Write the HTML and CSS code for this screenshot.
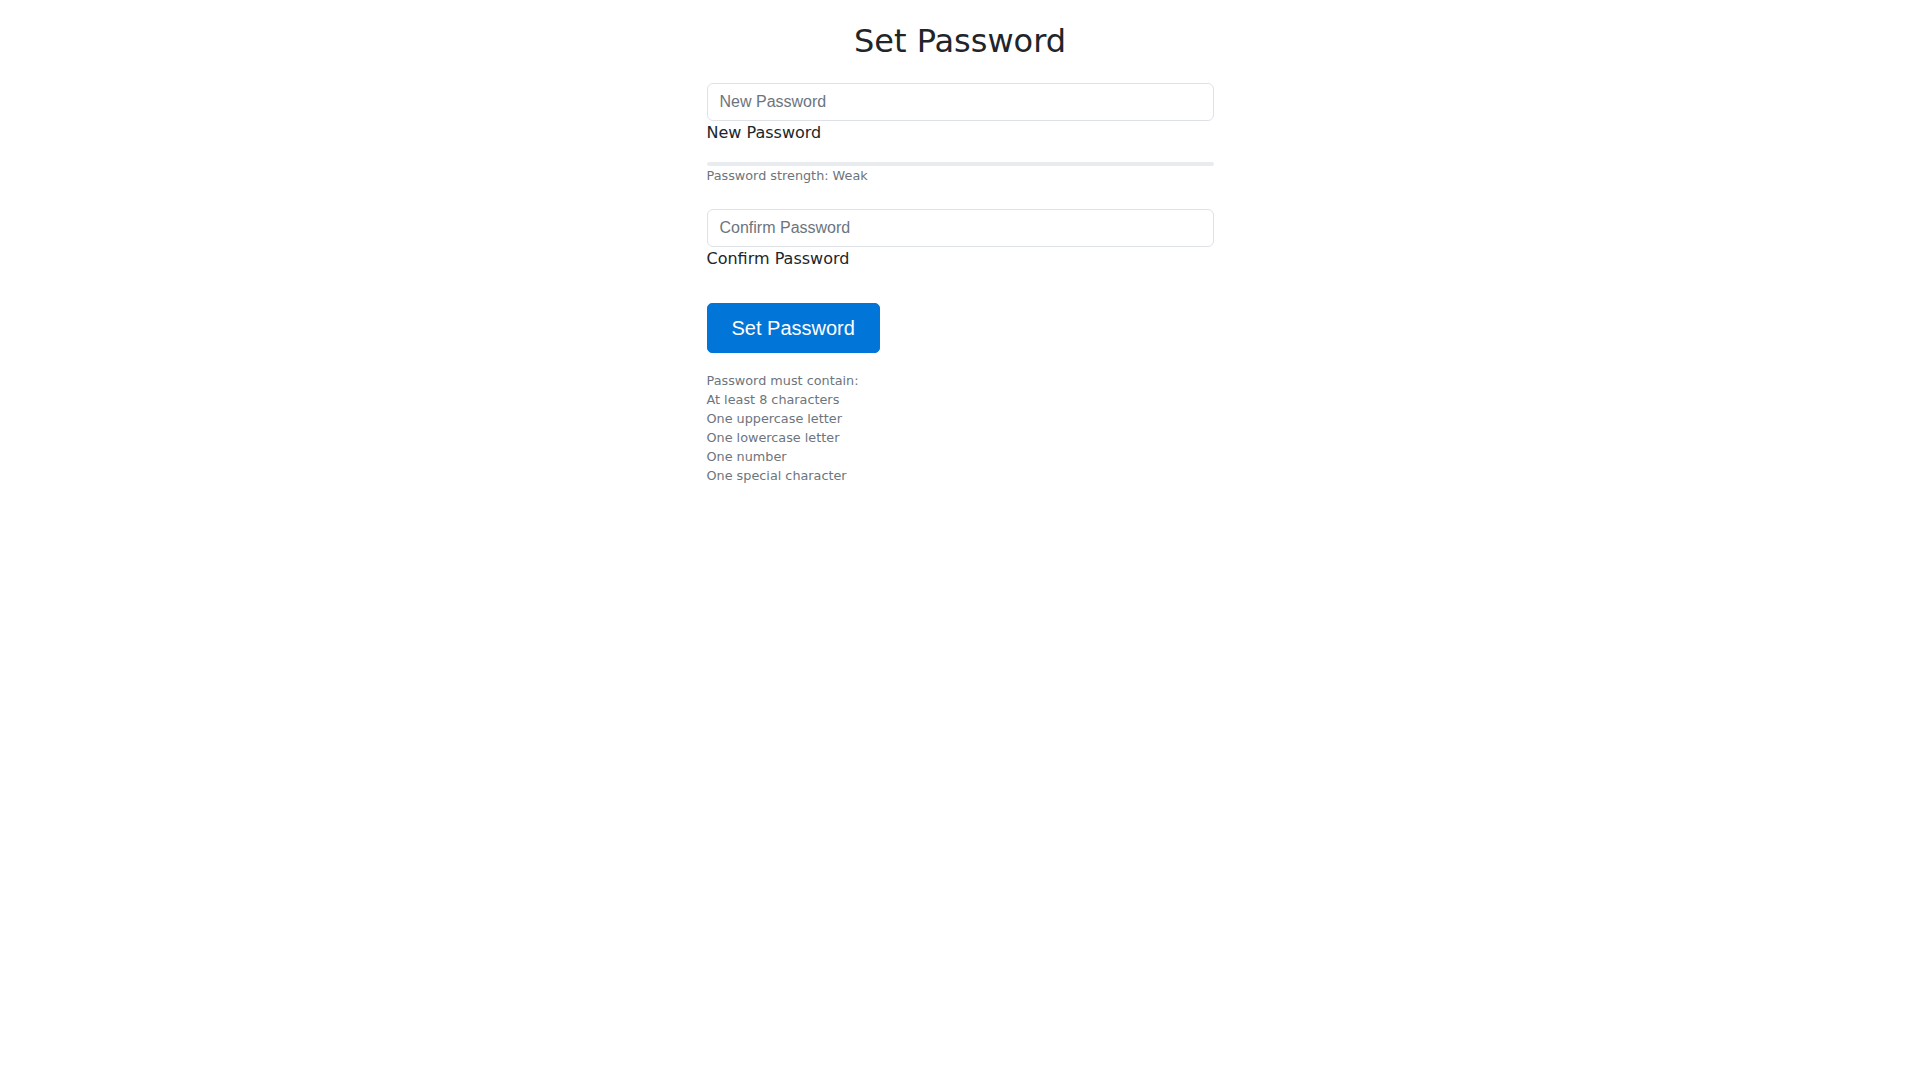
FILE: index.html
```html
<!DOCTYPE html>
<html lang="en">
<head>
<meta charset="utf-8">
<title>Set Password</title>
<link rel="stylesheet" href="styles.css">
</head>
<body>
<main class="wrap">
  <h2 class="title">Set Password</h2>
  <form class="form">
    <div class="field">
      <input class="control" type="password" placeholder="New Password">
      <label class="label">New Password</label>
    </div>
    <div class="strength">
      <div class="progress"><div class="progress-bar" style="width:0%"></div></div>
      <div class="hint">Password strength: Weak</div>
    </div>
    <div class="field">
      <input class="control" type="password" placeholder="Confirm Password">
      <label class="label">Confirm Password</label>
    </div>
    <button class="btn" type="button">Set Password</button>
  </form>
  <div class="reqs">
    <div>Password must contain:</div>
    <div>At least 8 characters</div>
    <div>One uppercase letter</div>
    <div>One lowercase letter</div>
    <div>One number</div>
    <div>One special character</div>
  </div>
</main>
</body>
</html>
```

FILE: styles.css
```css
* { box-sizing: border-box; }
html, body {
  margin: 0;
  padding: 0;
  background: #fff;
}
body {
  font-family: "DejaVu Sans", sans-serif;
  font-size: 16px;
  line-height: 1.5;
  color: #212529;
}
.wrap {
  width: 507px;
  margin: 0 auto;
  padding-top: 22px;
}
.title {
  margin: 0 0 23px;
  font-size: 32px;
  font-weight: 400;
  line-height: 1.2;
  text-align: center;
  color: #212529;
}
.form {
  display: flex;
  flex-direction: column;
  align-items: stretch;
}
.field {
  display: flex;
  flex-direction: column;
}
.control {
  display: block;
  width: 100%;
  height: 38px;
  padding: 6px 12px;
  font-family: "Liberation Sans", Arial, sans-serif;
  font-size: 16px;
  line-height: 24px;
  color: #212529;
  background: #fff;
  border: 1px solid #dee2e6;
  border-radius: 6px;
  outline: none;
}
.control::placeholder { color: #6c757d; opacity: 1; }
.label {
  display: block;
  font-size: 16px;
  line-height: 24px;
  color: #212529;
}
.strength {
  margin-top: 17px;
  margin-bottom: 24px;
}
.progress {
  height: 4px;
  background: #e9ecef;
  border-radius: 4px;
  overflow: hidden;
}
.progress-bar {
  height: 100%;
  background: #dc3545;
}
.hint {
  margin-top: 0;
  font-size: 12.8px;
  line-height: 19px;
  color: #6c757d;
}
.btn {
  align-self: flex-start;
  margin-top: 32px;
  height: 50px;
  padding: 0 24px;
  font-family: "Liberation Sans", Arial, sans-serif;
  font-size: 20px;
  line-height: 30px;
  color: #fff;
  background: #0275d8;
  border: 1px solid #0275d8;
  border-radius: 5px;
  cursor: pointer;
}
.reqs {
  margin-top: 18px;
  font-size: 12.8px;
  line-height: 19px;
  color: #6c757d;
}
```
